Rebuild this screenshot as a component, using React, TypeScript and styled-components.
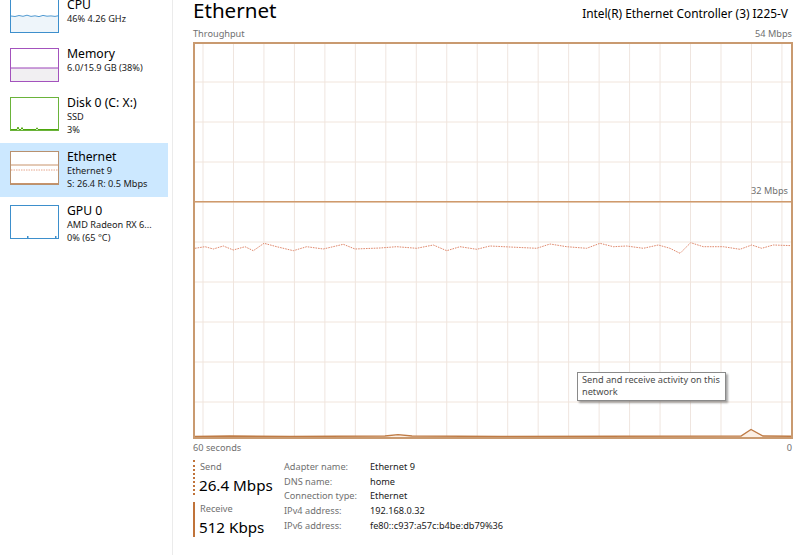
import React from "react";
import styled, { createGlobalStyle } from "styled-components";

const GlobalStyle = createGlobalStyle`
  html, body { margin: 0; padding: 0; background: #ffffff; overflow: hidden; }
  body { font-family: "Noto Sans", "Open Sans", sans-serif; color: #000; }
  * { box-sizing: border-box; }
`;

const Layout = styled.div`
  display: grid;
  grid-template-columns: 173px 1fr;
  width: 800px;
  height: 555px;
  overflow: hidden;
`;

const Sidebar = styled.nav`
  border-right: 1px solid #ebebeb;
  padding-right: 4px;
  overflow: hidden;
`;

const ItemList = styled.div`
  display: flex;
  flex-direction: column;
  margin-top: -9px;
`;

const Item = styled.div<{ $active?: boolean }>`
  display: flex;
  align-items: flex-start;
  gap: 8px;
  padding: 5px 0 7px 10px;
  background: ${(p) => (p.$active ? "#cce8ff" : "transparent")};
`;

const Thumb = styled.div<{ $c: string }>`
  flex: none;
  width: 49px;
  height: 34px;
  margin-top: 3px;
  border: 1px solid ${(p) => p.$c};
  background: #fff;
  svg { display: block; width: 100%; height: 100%; }
`;

const ItemText = styled.div`
  display: flex;
  flex-direction: column;
  white-space: nowrap;
  padding-top: 1px;
`;

const ItemTitle = styled.div`
  font-size: 12.2px;
  line-height: 15px;
  color: #000;
`;

const ItemSub = styled.div`
  font-size: 9.2px;
  line-height: 13px;
  color: #1a1a1a;
`;

const Main = styled.main`
  display: flex;
  flex-direction: column;
  padding: 0 7px 0 20px;
  min-width: 0;
`;

const Header = styled.header`
  display: flex;
  justify-content: space-between;
  align-items: baseline;
  height: 27px;
  padding-right: 5px;
`;

const Heading = styled.h1`
  margin: 0;
  font-weight: 400;
  font-size: 20.6px;
  line-height: 21px;
  color: #000;
`;

const Adapter = styled.div`
  font-size: 11.9px;
  color: #000;
`;

const Caption = styled.div`
  display: flex;
  justify-content: space-between;
  font-size: 9.2px;
  line-height: 13px;
  color: #707070;
  padding-right: 1px;
`;

const TopCaption = styled(Caption)`
  margin-bottom: 2px;
`;

const BottomCaption = styled(Caption)`
  margin-top: 2px;
`;

const Chart = styled.div`
  position: relative;
  height: 397px;
  border: 2px solid #c99a70;
  svg { display: block; width: 100%; height: 100%; }
`;

const ScaleLabel = styled.span`
  position: absolute;
  right: 3px;
  top: 140px;
  font-size: 9.2px;
  line-height: 13px;
  color: #707070;
`;

const Tooltip = styled.div`
  position: absolute;
  left: 382px;
  top: 328px;
  width: 149px;
  padding: 1px 4px 2px 4px;
  background: #fff;
  border: 1px solid #8a8a8a;
  box-shadow: 2px 2px 2px rgba(0, 0, 0, 0.35);
  font-size: 9.2px;
  line-height: 12px;
  color: #4a4a4a;
`;

const Stats = styled.section`
  display: grid;
  grid-template-columns: 91px 1fr;
  margin-top: 6px;
`;

const StatCol = styled.div`
  display: flex;
  flex-direction: column;
  gap: 7px;
`;

const StatBlock = styled.div<{ $dotted?: boolean }>`
  border-left: 2px ${(p) => (p.$dotted ? "dotted" : "solid")} #c0733a;
  padding-left: 5px;
`;

const StatLabel = styled.div`
  font-size: 9.2px;
  line-height: 13px;
  color: #707070;
`;

const StatValue = styled.div`
  font-size: 15.2px;
  line-height: 20px;
  margin-top: 2px;
  margin-left: -1px;
  color: #000;
`;

const Details = styled.dl`
  display: grid;
  grid-template-columns: 86px 1fr;
  grid-auto-rows: 14.7px;
  margin: 0;
  font-size: 9.2px;
  line-height: 14.7px;
  white-space: nowrap;
`;

const DT = styled.dt`
  color: #707070;
`;

const DD = styled.dd`
  margin: 0;
  color: #1a1a1a;
`;

const toInner = (pts: number[][]) =>
  pts.map(([x, y]) => `${(x - 195).toFixed(1)},${(y - 44).toFixed(1)}`).join(" ");

const sendPts = [
  [195, 248.3], [205, 246.7], [213.3, 249], [223.3, 246], [233.3, 250], [245, 246.7],
  [253.3, 250.7], [264, 243.3], [276.7, 246.7], [293.3, 250.7], [306.7, 246.7],
  [323.3, 249], [343.3, 244.3], [355, 249], [380, 248], [396.7, 246.7], [416.7, 248.3],
  [433.3, 245], [446.7, 250.7], [460, 246.7], [476.7, 249.3], [490, 246], [510, 247],
  [536.7, 248.3], [550, 244], [566.7, 246.7], [586.7, 248.3], [600, 243.3],
  [613.3, 246.7], [626.7, 246], [643.3, 248.3], [658.3, 245], [670, 248.3],
  [680, 253.3], [690.7, 242.7], [703.3, 246.7], [723.3, 246.7], [740, 249.3],
  [751.7, 245], [761.7, 248.3], [773.3, 245], [793, 245.7],
];

const recvPts = [
  [195, 436.5], [230, 436], [290, 436.5], [385, 436], [398, 434.6], [412, 436],
  [500, 436.5], [741, 436], [751, 429.5], [763, 436], [793, 436.2],
];

const vLines = Array.from({ length: 20 }, (_, k) => 8 + k * 30.47);
const hLines = Array.from({ length: 9 }, (_, k) => 38 + k * 40);

const ThroughputChart = () => (
  <svg viewBox="0 0 596 393" preserveAspectRatio="none">
    {vLines.map((x) => (
      <line key={`v${x}`} x1={x} y1={0} x2={x} y2={393} stroke="#efe5df" strokeWidth={1} />
    ))}
    {hLines.map((y) => (
      <line key={`h${y}`} x1={0} y1={y} x2={596} y2={y} stroke="#f1e5dc" strokeWidth={1} />
    ))}
    <line x1={0} y1={157.7} x2={596} y2={157.7} stroke="#cf9a6c" strokeWidth={1.5} />
    <polyline
      points={toInner(sendPts)}
      fill="none"
      stroke="#e08a6e"
      strokeWidth={1}
      strokeDasharray="1.6 1"
    />
    <polygon points={`${toInner(recvPts)} 598,393 0,393`} fill="#fcefe3" />
    <polyline points={toInner(recvPts)} fill="none" stroke="#bf7b45" strokeWidth={1.4} />
  </svg>
);

const CpuThumb = () => (
  <svg viewBox="0 0 47 32" preserveAspectRatio="none">
    <polygon
      points="0,16 4,16.5 8,15.5 12,16.3 16,15.2 20,16.4 24,15.8 28,16.6 32,15.4 36,16.2 40,15.9 44,16.4 47,15.8 47,32 0,32"
      fill="#eef5fa"
    />
    <polyline
      points="0,16 4,16.5 8,15.5 12,16.3 16,15.2 20,16.4 24,15.8 28,16.6 32,15.4 36,16.2 40,15.9 44,16.4 47,15.8"
      fill="none"
      stroke="#3d8fcc"
      strokeWidth={0.9}
    />
  </svg>
);

const MemThumb = () => (
  <svg viewBox="0 0 47 32" preserveAspectRatio="none">
    <rect x={0} y={19} width={47} height={13} fill="#f1eff2" />
    <line x1={0} y1={19} x2={47} y2={19} stroke="#9b43b8" strokeWidth={1} />
  </svg>
);

const DiskThumb = () => (
  <svg viewBox="0 0 47 32" preserveAspectRatio="none">
    <polyline
      points="0,31.5 6,31.5 7,29 8,31.5 10,31.5 11,29.5 12,31.5 25,31.5 26,29.8 27,31.5 47,31.5"
      fill="none"
      stroke="#4da60c"
      strokeWidth={1}
    />
  </svg>
);

const EthThumb = () => (
  <svg viewBox="0 0 47 32" preserveAspectRatio="none">
    <line x1={0} y1={13} x2={47} y2={13} stroke="#c8936a" strokeWidth={1} />
    <line x1={0} y1={18} x2={47} y2={18} stroke="#e09070" strokeWidth={0.8} strokeDasharray="1.5 1" />
    <line x1={0} y1={31.5} x2={47} y2={31.5} stroke="#c8936a" strokeWidth={1} />
  </svg>
);

const GpuThumb = () => (
  <svg viewBox="0 0 47 32" preserveAspectRatio="none">
    <rect x={16} y={30} width={1.5} height={2} fill="#3d8fcc" />
    <rect x={44} y={30} width={1.5} height={2} fill="#3d8fcc" />
  </svg>
);

type Res = {
  title: string;
  lines: string[];
  color: string;
  thumb: React.ReactNode;
  active?: boolean;
};

const resources: Res[] = [
  { title: "CPU", lines: ["46%  4.26 GHz"], color: "#3d8fcc", thumb: <CpuThumb /> },
  { title: "Memory", lines: ["6.0/15.9 GB (38%)"], color: "#a352bd", thumb: <MemThumb /> },
  { title: "Disk 0 (C: X:)", lines: ["SSD", "3%"], color: "#6ab33a", thumb: <DiskThumb /> },
  {
    title: "Ethernet",
    lines: ["Ethernet 9", "S: 26.4 R: 0.5 Mbps"],
    color: "#b8916f",
    thumb: <EthThumb />,
    active: true,
  },
  { title: "GPU 0", lines: ["AMD Radeon RX 6...", "0%  (65 °C)"], color: "#3d8fcc", thumb: <GpuThumb /> },
];

const details: [string, string][] = [
  ["Adapter name:", "Ethernet 9"],
  ["DNS name:", "home"],
  ["Connection type:", "Ethernet"],
  ["IPv4 address:", "192.168.0.32"],
  ["IPv6 address:", "fe80::c937:a57c:b4be:db79%36"],
];

export default function App() {
  return (
    <>
      <GlobalStyle />
      <Layout>
        <Sidebar>
          <ItemList>
            {resources.map((r) => (
              <Item key={r.title} $active={r.active}>
                <Thumb $c={r.color}>{r.thumb}</Thumb>
                <ItemText>
                  <ItemTitle>{r.title}</ItemTitle>
                  {r.lines.map((l) => (
                    <ItemSub key={l}>{l}</ItemSub>
                  ))}
                </ItemText>
              </Item>
            ))}
          </ItemList>
        </Sidebar>
        <Main>
          <Header>
            <Heading>Ethernet</Heading>
            <Adapter>Intel(R) Ethernet Controller (3) I225-V</Adapter>
          </Header>
          <TopCaption>
            <span>Throughput</span>
            <span>54 Mbps</span>
          </TopCaption>
          <Chart>
            <ThroughputChart />
            <ScaleLabel>32 Mbps</ScaleLabel>
            <Tooltip>Send and receive activity on this network</Tooltip>
          </Chart>
          <BottomCaption>
            <span>60 seconds</span>
            <span>0</span>
          </BottomCaption>
          <Stats>
            <StatCol>
              <StatBlock $dotted>
                <StatLabel>Send</StatLabel>
                <StatValue>26.4 Mbps</StatValue>
              </StatBlock>
              <StatBlock>
                <StatLabel>Receive</StatLabel>
                <StatValue>512 Kbps</StatValue>
              </StatBlock>
            </StatCol>
            <Details>
              {details.map(([k, v]) => (
                <React.Fragment key={k}>
                  <DT>{k}</DT>
                  <DD>{v}</DD>
                </React.Fragment>
              ))}
            </Details>
          </Stats>
        </Main>
      </Layout>
    </>
  );
}
